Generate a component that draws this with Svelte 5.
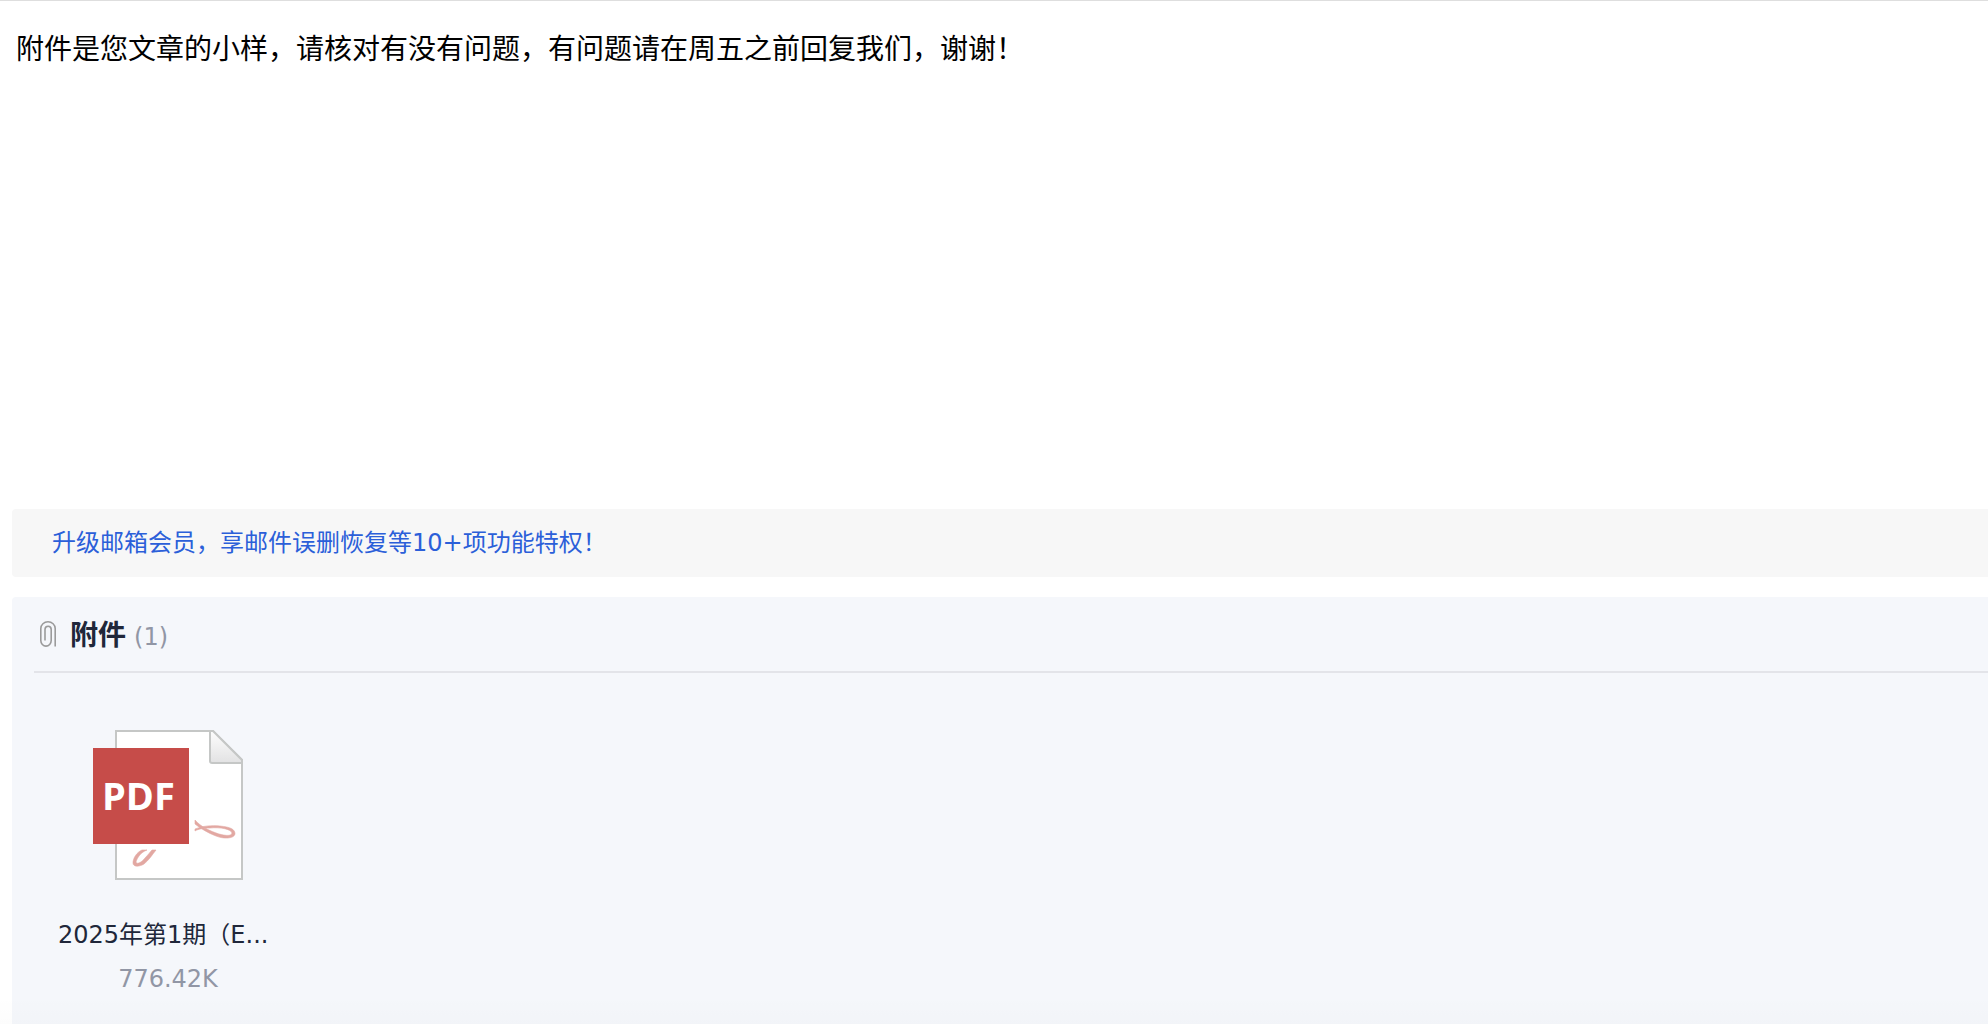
<script lang="ts">
  interface Attachment {
    name: string;
    size: string;
  }

  const body = '附件是您文章的小样，请核对有没有问题，有问题请在周五之前回复我们，谢谢！';
  const promo = '升级邮箱会员，享邮件误删恢复等10+项功能特权！';

  const attachments: Attachment[] = [
    { name: '2025年第1期（E...', size: '776.42K' },
  ];
</script>

<main class="mail">
  <article class="content">
    <p>{body}</p>
  </article>

  <aside class="promo">
    <a href="#vip">{promo}</a>
  </aside>

  <section class="attachments" aria-labelledby="attachments-title">
    <header class="head">
      <svg class="clip" width="16" height="26" viewBox="0 0 16 26" aria-hidden="true">
        <path d="M15.2 25.5V7.5A7.2 6.7 0 0 0 .8 7.5V19.5A5.2 5.6 0 0 0 11.2 19.5V8.5A3.1 3.3 0 0 0 5 8.5V19.5" />
      </svg>
      <h2 id="attachments-title">附件</h2>
      <span class="count">({attachments.length})</span>
    </header>

    <ul class="files">
      {#each attachments as file}
        <li class="file">
          <svg class="file-icon" width="150" height="150" viewBox="0 0 150 150" role="img" aria-label="PDF">
            <defs>
              <linearGradient id="fold" x1="0" y1="0" x2="0" y2="1">
                <stop offset="0" stop-color="#fdfdfd" />
                <stop offset="1" stop-color="#e2e2e3" />
              </linearGradient>
            </defs>
            <path d="M23 1H120L149 30V149H23Z" fill="#fff" stroke="#c5c7c6" stroke-width="2" />
            <path d="M117 1H120L149 30V33H119Q117 33 117 31Z" fill="url(#fold)" stroke="#c5c7c6" stroke-width="2" />
            <g class="swirl">
              <path d="M102 90C108 97 117 101 126 104C133 106 139 106 139 103C138 99 127 97 117 98C111 98 105 99 102 101L102 99C109 96 119 95 127 96C137 97 142 99 142 104C141 109 130 109 123 106C115 103 107 98 102 94Z" />
              <path d="M49 120H54C48 122 44 128 43 132C44 135 49 132 52 128C55 125 57 122 59 120H63C59 125 56 130 51 134C46 137 40 137 40 133C40 128 44 122 49 120Z" />
            </g>
            <rect y="18" width="96" height="96" fill="#c64c49" />
            <text x="9" y="80">PDF</text>
          </svg>
          <a class="name" href="#file">{file.name}</a>
          <span class="size">{file.size}</span>
        </li>
      {/each}
    </ul>
  </section>

  <div class="fade"></div>
</main>

<style>
  :global(body) {
    margin: 0;
    background: #fff;
  }

  .mail {
    position: relative;
    box-sizing: border-box;
    display: flex;
    flex-direction: column;
    min-height: 100vh;
    padding-left: 12px;
    border-top: 1px solid #dedede;
    font-family: 'DejaVu Sans', 'Noto Sans CJK SC', sans-serif;
    font-size: 24px;
    line-height: 36px;
  }

  .content {
    box-sizing: border-box;
    min-height: 508px;
    padding: 26px 4px 0;
    font-family: 'Noto Sans CJK SC', sans-serif;
    font-size: 28px;
    line-height: 40px;
    color: #000;
  }

  .content p {
    margin: 0;
  }

  .promo {
    padding: 16px 40px;
    border-radius: 4px 0 0 4px;
    background: #f7f7f7;
  }

  .promo a {
    color: #2b5fd9;
    text-decoration: none;
  }

  .attachments {
    flex: 1;
    margin-top: 20px;
    padding-left: 22px;
    border-radius: 4px 0 0 0;
    background: #f5f7fb;
  }

  .head {
    box-sizing: border-box;
    display: flex;
    align-items: center;
    height: 76px;
    padding-left: 6px;
    border-bottom: 2px solid #e3e4e9;
  }

  .clip {
    fill: none;
    stroke: #9b9b9b;
    stroke-width: 1.6;
  }

  .head h2 {
    margin: 0 8px 0 14px;
    padding-top: 4px;
    font-size: 28px;
    font-weight: 700;
    color: #20273a;
  }

  .count {
    padding-top: 6px;
    color: #9196a5;
  }

  .files {
    display: flex;
    flex-wrap: wrap;
    margin: 0;
    padding: 57px 24px 0;
    list-style: none;
  }

  .file {
    display: flex;
    flex-direction: column;
    align-items: center;
    width: 220px;
  }

  .file-icon text {
    fill: #fff;
    font-family: 'Open Sans', sans-serif;
    font-size: 38px;
    font-weight: 700;
  }

  .swirl {
    fill: #e2a8a2;
    stroke: #e2a8a2;
    stroke-width: 0.6;
  }

  .name {
    width: 100%;
    margin: 37px 0 8px;
    overflow: hidden;
    color: #20273a;
    text-decoration: none;
    text-overflow: ellipsis;
    white-space: nowrap;
  }

  .size {
    color: #9196a5;
  }

  /* soft shadow cast by the bottom edge of the reading pane */
  .fade {
    position: absolute;
    right: 0;
    bottom: 0;
    left: 0;
    height: 28px;
    background: linear-gradient(rgba(0, 0, 0, 0), rgba(0, 0, 0, 0.01));
    pointer-events: none;
  }
</style>
